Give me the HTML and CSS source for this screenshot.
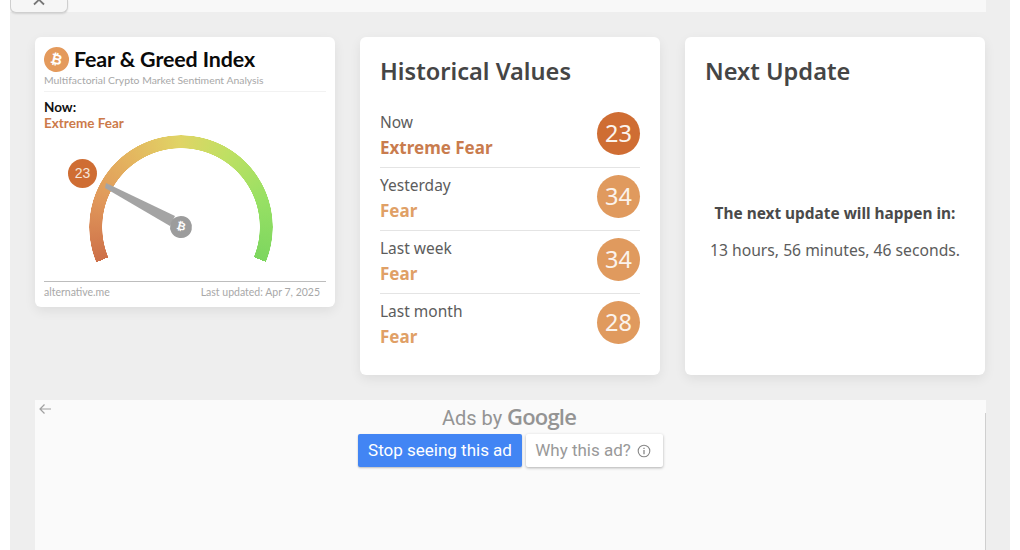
FILE: index.html
```html
<!DOCTYPE html>
<html lang="en">
<head>
<meta charset="utf-8">
<title>Fear &amp; Greed Index</title>
<link rel="stylesheet" href="styles.css">
</head>
<body>
<div class="page">
  <div class="topbar">
    <div class="close-tab">
      <svg class="close-x" width="18" height="6" viewBox="0 0 18 6"><path d="M3 -6 L14 4.500 M15 -6 L4 4.500" fill="none" stroke="#777" stroke-width="1.800"/></svg>
    </div>
  </div>
  <div class="cards">
    <section class="card fng">
      <header class="fng-head">
        <span class="coin">₿</span>
        <h1>Fear &amp; Greed Index</h1>
      </header>
      <p class="fng-sub">Multifactorial Crypto Market Sentiment Analysis</p>
      <div class="fng-now">
        <div class="now-label">Now:</div>
        <div class="now-value">Extreme Fear</div>
      </div>
      <div class="gauge">
        <div class="arc"></div>
        <svg class="needle" width="80" height="50" viewBox="0 0 80 50"><polygon points="1,1 70,34 65,44 0,6" fill="#a4a4a4"/></svg>
        <span class="hub">₿</span>
        <span class="gauge-badge">23</span>
      </div>
      <footer class="fng-foot">
        <span>alternative.me</span>
        <span class="foot-date">Last updated: Apr 7, 2025</span>
      </footer>
    </section>

    <section class="card">
      <h2>Historical Values</h2>
      <ul class="hist">
        <li class="hist-row">
          <div class="hist-text"><div class="hist-when">Now</div><div class="hist-val extreme">Extreme Fear</div></div>
          <span class="score extreme-bg">23</span>
        </li>
        <li class="hist-row">
          <div class="hist-text"><div class="hist-when">Yesterday</div><div class="hist-val fear">Fear</div></div>
          <span class="score fear-bg">34</span>
        </li>
        <li class="hist-row">
          <div class="hist-text"><div class="hist-when">Last week</div><div class="hist-val fear">Fear</div></div>
          <span class="score fear-bg">34</span>
        </li>
        <li class="hist-row">
          <div class="hist-text"><div class="hist-when">Last month</div><div class="hist-val fear">Fear</div></div>
          <span class="score fear-bg">28</span>
        </li>
      </ul>
    </section>

    <section class="card next">
      <h2>Next Update</h2>
      <div class="next-body">
        <p class="next-title">The next update will happen in:</p>
        <p class="next-time">13 hours, 56 minutes, 46 seconds.</p>
      </div>
    </section>
  </div>

  <div class="ad">
    <svg class="ad-back" width="14" height="12" viewBox="0 0 14 12"><path d="M13 6 H2 M6.500 1.500 L2 6 L6.500 10.500" fill="none" stroke="#a0a0a0" stroke-width="1.200"/></svg>
    <div class="ad-by">Ads by <b>Google</b></div>
    <div class="ad-actions">
      <span class="ad-stop">Stop seeing this ad</span>
      <span class="ad-why">Why this ad?
        <svg width="14" height="14" viewBox="0 0 14 14"><circle cx="7" cy="7" r="5.800" fill="none" stroke="#888" stroke-width="1.100"/><path d="M7 6 V10.200 M7 3.800 V5" stroke="#888" stroke-width="1.300" fill="none"/></svg>
      </span>
    </div>
  </div>
</div>
</body>
</html>
```

FILE: styles.css
```css
* { box-sizing: border-box; }
html, body { margin: 0; height: 550px; overflow: hidden; background: #fff; }
body { font-family: "Noto Sans", "Open Sans", sans-serif; color: #444; }

.page {
  margin: 0 10px;
  height: 550px;
  background: #eeeeee;
  overflow: hidden;
}

.topbar {
  width: 976px;
  height: 12px;
  background: #f8f8f8;
}
.close-tab {
  width: 58px;
  height: 13px;
  background: #f6f6f6;
  border: 1px solid #cfcfcf;
  border-top: 0;
  border-radius: 0 0 6px 6px;
  box-shadow: 0 1px 2px rgba(0,0,0,.12);
  display: flex;
  justify-content: center;
}
.close-x { display: block; }

.cards {
  display: flex;
  align-items: flex-start;
  gap: 25px;
  margin: 25px 0 0 25px;
}
.card {
  width: 300px;
  height: 338px;
  padding: 20px;
  background: #fff;
  border-radius: 6px;
  box-shadow: 0 4px 12px rgba(0,0,0,.07);
}
h2 {
  margin: 0;
  font: 600 23.600px/28px "Noto Sans", sans-serif;
  color: #454545;
}

/* gauge card */
.fng {
  height: 270px;
  padding: 8px 9px 0;
  font-family: Lato, sans-serif;
}
.fng-head { display: flex; align-items: center; gap: 5px; height: 28px; }
.coin {
  width: 25px;
  height: 25px;
  border-radius: 50%;
  background: #e49a5c;
  color: #fff;
  font: 700 14px/25px "DejaVu Sans", sans-serif;
  text-align: center;
  transform: rotate(14deg);
}
h1 { margin: 0; font: 700 21.400px/28px Lato, sans-serif; color: #0a0a0a; letter-spacing: -.1px; }
.fng-sub {
  margin: 1px 0 0;
  padding-bottom: 4px;
  border-bottom: 1px solid #f2f2f2;
  font-size: 10.400px;
  line-height: 13px;
  color: #a8a8a8;
}
.fng-now { margin: 8px 0 2px; font-size: 13.500px; font-weight: 700; line-height: 15px; }
.now-label { color: #111; }
.now-value { color: #cc7a4a; margin-top: 1px; }
.gauge { position: relative; height: 150px; }
.arc {
  position: absolute;
  left: 45px;
  top: 2px;
  width: 184px;
  height: 184px;
  border-radius: 50%;
  background: conic-gradient(from 247.400deg, #cd7049 0deg, #e0975a 40deg, #e4b45f 75deg, #e0d465 112deg, #bfe063 145deg, #97e064 185deg, #7dd65f 225deg, transparent 225deg);
  -webkit-mask: radial-gradient(circle, transparent 78.500px, #000 79px, #000 91.500px, transparent 92px);
  mask: radial-gradient(circle, transparent 78.500px, #000 79px, #000 91.500px, transparent 92px);
}
.needle { position: absolute; left: 61px; top: 49px; }
.hub {
  position: absolute;
  left: 126px;
  top: 83px;
  width: 22px;
  height: 22px;
  border-radius: 50%;
  background: #9c9c9c;
  color: #fff;
  font: 700 11px/22px "DejaVu Sans", sans-serif;
  text-align: center;
  transform: rotate(14deg);
}
.gauge-badge {
  position: absolute;
  left: 24px;
  top: 26px;
  width: 29px;
  height: 29px;
  border-radius: 50%;
  background: #cf6d33;
  color: #f6e6da;
  font: 400 14px/29px "Liberation Sans", sans-serif;
  text-align: center;
}
.fng-foot {
  display: flex;
  justify-content: space-between;
  margin-top: -2px;
  padding: 4px 6px 0 0;
  border-top: 1px solid #bdbdbd;
  font-size: 10.500px;
  line-height: 13px;
  color: #a8a8a8;
}

/* history */
.hist { list-style: none; margin: 20px 0 0; padding: 0; }
.hist-row {
  display: flex;
  justify-content: space-between;
  align-items: center;
  height: 63px;
  border-bottom: 1px solid #e4e4e4;
}
.hist-row:last-child { border-bottom: 0; }
.hist-text { padding-bottom: 2px; }
.hist-when { font-size: 15.500px; line-height: 24px; color: #5c5c5c; }
.hist-val { font-size: 17px; font-weight: 700; line-height: 27px; }
.extreme { color: #c97c4e; }
.fear { color: #e0a066; }
.score {
  width: 43px;
  height: 43px;
  margin-bottom: 6px;
  border-radius: 50%;
  color: #fbf3ec;
  font-size: 23.500px;
  line-height: 43px;
  text-align: center;
}
.extreme-bg { background: #cf6d33; }
.fear-bg { background: #e09a5e; }

/* next update */
.next { display: flex; flex-direction: column; }
.next-body {
  flex: 1;
  display: flex;
  flex-direction: column;
  align-items: center;
  justify-content: center;
  padding-top: 23px;
}
.next-body p { margin: 0; line-height: 22px; }
.next-title { font-size: 15.400px; font-weight: 700; color: #4a4a4a; }
.next-body .next-time { margin-top: 14px; font-size: 15.700px; color: #5c5c5c; }

/* ad */
.ad {
  position: relative;
  width: 951px;
  height: 170px;
  margin: 25px 0 0 25px;
  padding-top: 3px;
  background: #fafafa;
  text-align: center;
}
.ad::after {
  content: "";
  position: absolute;
  right: 0;
  top: 13px;
  bottom: 0;
  width: 1px;
  background: #cfcfcf;
}
.ad-back { position: absolute; left: 3px; top: 3px; }
.ad-by { padding-right: 3px; font: 400 20px/27px Roboto, sans-serif; color: #949494; }
.ad-by b { font: 600 22px/27px "Open Sans", sans-serif; letter-spacing: -.8px; }
.ad-actions { display: flex; justify-content: center; gap: 4px; margin-top: 2px; }
.ad-stop, .ad-why {
  display: flex;
  align-items: center;
  height: 33px;
  border-radius: 2px;
  font: 400 17px/33px Roboto, sans-serif;
}
.ad-stop { width: 164px; justify-content: center; background: #4285f4; color: #fff; box-shadow: 0 1px 2px rgba(0,0,0,.25); }
.ad-why { width: 137px; justify-content: center; gap: 6px; padding-right: 3px; background: #fff; color: #999; box-shadow: 0 1px 3px rgba(0,0,0,.3); }
```
